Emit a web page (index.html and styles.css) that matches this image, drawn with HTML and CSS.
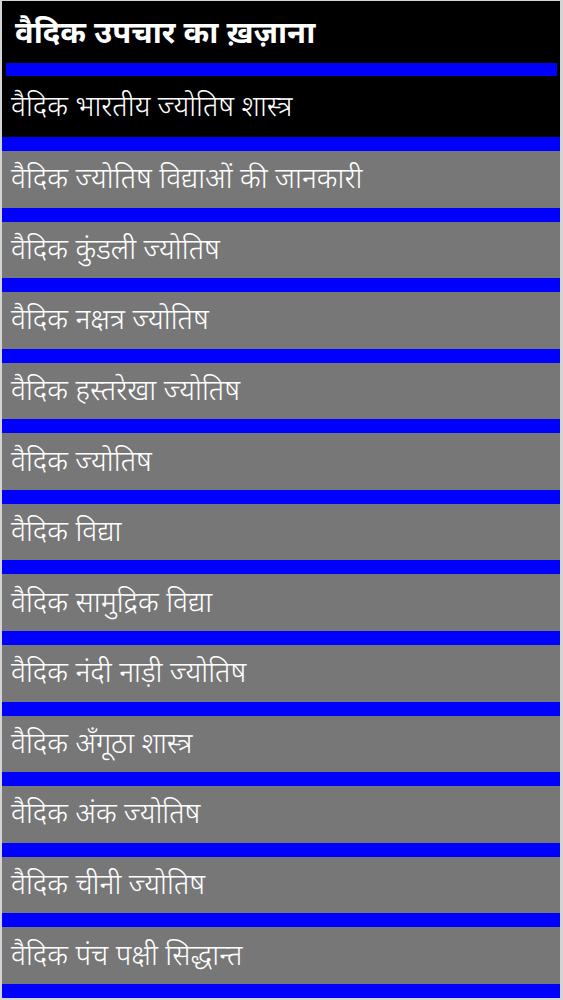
FILE: index.html
```html
<!DOCTYPE html>
<html lang="hi">
<head>
  <meta charset="UTF-8">
  <meta name="viewport" content="width=device-width, initial-scale=1.0">
  <title>वैदिक उपचार का ख़ज़ाना</title>
  <link rel="stylesheet" href="styles.css">
</head>
<body>
  <div class="screen">
    <header class="app-bar">
      <h1>वैदिक उपचार का ख़ज़ाना</h1>
      <div class="bar-line"></div>
    </header>
    <ul class="menu">
      <li class="item active">वैदिक भारतीय ज्योतिष शास्त्र</li>
      <li class="item">वैदिक ज्योतिष विद्याओं की जानकारी</li>
      <li class="item">वैदिक कुंडली ज्योतिष</li>
      <li class="item">वैदिक नक्षत्र ज्योतिष</li>
      <li class="item">वैदिक हस्तरेखा ज्योतिष</li>
      <li class="item">वैदिक ज्योतिष</li>
      <li class="item">वैदिक विद्या</li>
      <li class="item">वैदिक सामुद्रिक विद्या</li>
      <li class="item">वैदिक नंदी नाड़ी ज्योतिष</li>
      <li class="item">वैदिक अँगूठा शास्त्र</li>
      <li class="item">वैदिक अंक ज्योतिष</li>
      <li class="item">वैदिक चीनी ज्योतिष</li>
      <li class="item">वैदिक पंच पक्षी सिद्धान्त</li>
    </ul>
  </div>
</body>
</html>
```

FILE: styles.css
```css
html, body {
  margin: 0;
  padding: 0;
  background-color: #d4d4d4;
}
body {
  font-family: 'Noto Sans Devanagari', 'Noto Sans', sans-serif;
}
.screen {
  box-sizing: border-box;
  width: 563px;
  height: 1000px;
  border-style: solid;
  border-color: #d4d4d4;
  border-width: 1px 3px 2px 2px;
  background-color: #000;
  overflow: hidden;
}
.app-bar {
  background-color: #000;
  padding-top: 13px;
}
.app-bar h1 {
  margin: 0 0 0 13px;
  color: #fff;
  font-size: 31px;
  font-weight: bold;
  line-height: 44px;
  height: 49px;
}
.bar-line {
  height: 13px;
  margin: 0 3px 0 4px;
  background-color: #0000ff;
}
.menu {
  list-style: none;
  margin: 0;
  padding: 0;
}
.item {
  display: flex;
  align-items: center;
  height: 52.58px;
  padding: 4px 0 0 9px;
  border-bottom: 14px solid #0000ff;
  background-color: #777;
  color: #fff;
  font-size: 28.5px;
  font-weight: 300;
}
.item.active {
  height: 57px;
  background-color: #000;
}
```
